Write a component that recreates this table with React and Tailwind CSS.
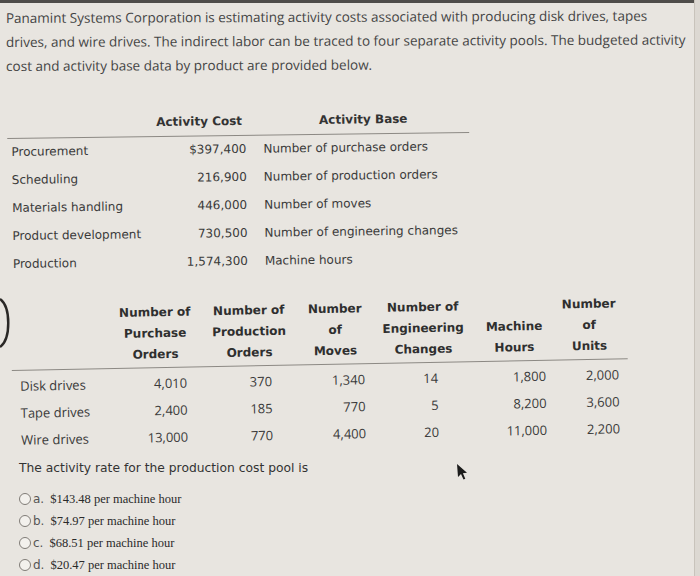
import React from 'react'

const costs = [
  ['Procurement', '$397,400', 'Number of purchase orders'],
  ['Scheduling', '216,900', 'Number of production orders'],
  ['Materials handling', '446,000', 'Number of moves'],
  ['Product development', '730,500', 'Number of engineering changes'],
  ['Production', '1,574,300', 'Machine hours'],
]

const products = [
  ['Disk drives', '4,010', '370', '1,340', '14', '1,800', '2,000'],
  ['Tape drives', '2,400', '185', '770', '5', '8,200', '3,600'],
  ['Wire drives', '13,000', '770', '4,400', '20', '11,000', '2,200'],
]

const options = [
  ['a.', '$143.48 per machine hour'],
  ['b.', '$74.97 per machine hour'],
  ['c.', '$68.51 per machine hour'],
  ['d.', '$20.47 per machine hour'],
]

export default function App() {
  return (
    <div className="relative w-[700px] h-[576px] overflow-hidden bg-[#e8e5e0] text-[#3a3a3a]">
      {/* top edge of the screen */}
      <div className="h-[3px] bg-[#4f4d4a]" />
      <div className="absolute right-0 top-0 h-full w-[6px] bg-[#dcd8d2] border-l border-[#c8c3bb]" />

      {/* intro */}
      <p className="pl-[6px] pt-[3px] font-['Open_Sans',sans-serif] text-[13.5px] leading-[24px] text-[#444] whitespace-nowrap origin-left -rotate-[0.2deg]">
        Panamint Systems Corporation is estimating activity costs associated with producing disk drives, tapes
        <br />
        drives, and wire drives. The indirect labor can be traced to four separate activity pools. The budgeted activity
        <br />
        cost and activity base data by product are provided below.
      </p>

      {/* activity cost table */}
      <div className="mt-[38px] ml-[8px] w-[462px] font-['DejaVu_Sans',sans-serif] text-[12px] origin-left -rotate-[0.75deg]">
        <div className="grid grid-cols-[160px_79px_223px] leading-[16px] pb-[6px] font-bold text-[#333] border-b border-[#8c8984]">
          <div />
          <div className="flex justify-end pr-[4px] whitespace-nowrap">Activity Cost</div>
          <div className="pl-[73px] whitespace-nowrap">Activity Base</div>
        </div>
        <div className="-mt-[1px]">
          {costs.map(([label, cost, base]) => (
            <div key={label} className="grid grid-cols-[160px_79px_223px] h-[28px] items-center">
              <div className="pl-[4px] whitespace-nowrap">{label}</div>
              <div className="text-right">{cost}</div>
              <div className="pl-[17px] whitespace-nowrap">{base}</div>
            </div>
          ))}
        </div>
      </div>

      {/* product table */}
      <div className="mt-[27px] ml-[12px] w-[616px] origin-left -rotate-[1.1deg]">
        <div className="grid grid-cols-[100px_88px_100px_72px_104px_78px_74px] items-end pb-[2px] font-['DejaVu_Sans',sans-serif] text-[12px] leading-[21px] font-bold text-[#2f2f2f] text-center border-b border-[#8c8984]">
          <div />
          <div>Number of<br />Purchase<br />Orders</div>
          <div>Number of<br />Production<br />Orders</div>
          <div>Number<br />of<br />Moves</div>
          <div>Number of<br />Engineering<br />Changes</div>
          <div>Machine<br />Hours</div>
          <div className="pr-[2px]">Number<br />of<br />Units</div>
        </div>
        <div className="mt-[2px] font-['Open_Sans',sans-serif] text-[13px]">
          {products.map((r) => (
            <div key={r[0]} className="grid grid-cols-[100px_88px_100px_72px_104px_78px_74px] h-[27px] items-center">
              <div className="pl-[8px]">{r[0]}</div>
              <div className="text-right pr-[13px]">{r[1]}</div>
              <div className="text-right pr-[28px]">{r[2]}</div>
              <div className="text-right pr-[7px]">{r[3]}</div>
              <div className="text-right pr-[38px]">{r[4]}</div>
              <div className="text-right pr-[8px]">{r[5]}</div>
              <div className="text-right pr-[9px]">{r[6]}</div>
            </div>
          ))}
        </div>
      </div>

      {/* question */}
      <p className="mt-[4px] pl-[19px] font-['DejaVu_Sans',sans-serif] text-[12.3px] leading-[20px] text-[#333]">
        The activity rate for the production cost pool is
      </p>
      <div className="mt-[10px] pl-[19px]">
        {options.map(([letter, text]) => (
          <label key={letter} className="flex items-center h-[22px]">
            <span className="w-[12px] h-[12px] rounded-full border border-[#807c77] bg-[#f3f1ed]" />
            <span className="ml-[2px] font-['DejaVu_Sans',sans-serif] text-[12px] text-[#555]">{letter}</span>
            <span className="ml-[6px] font-['Liberation_Serif',serif] text-[12.5px] text-[#2a2a2a]">{text}</span>
          </label>
        ))}
      </div>

      {/* edge of a round control at the left */}
      <svg className="absolute left-0 top-[297px]" width="12" height="52" viewBox="0 0 12 52" fill="none">
        <path d="M0 2 C 11 10, 11 42, 0 50" stroke="#2a2826" strokeWidth="2.5" />
      </svg>

      {/* mouse pointer */}
      <svg className="absolute left-[456px] top-[463px]" width="12" height="18" viewBox="0 0 12 18">
        <path d="M1 1 L2 14 L5 11 L7.5 16.5 L9.3 15.7 L6.9 10.3 L11 9.8 Z" fill="#1c1c1c" />
      </svg>
    </div>
  )
}
